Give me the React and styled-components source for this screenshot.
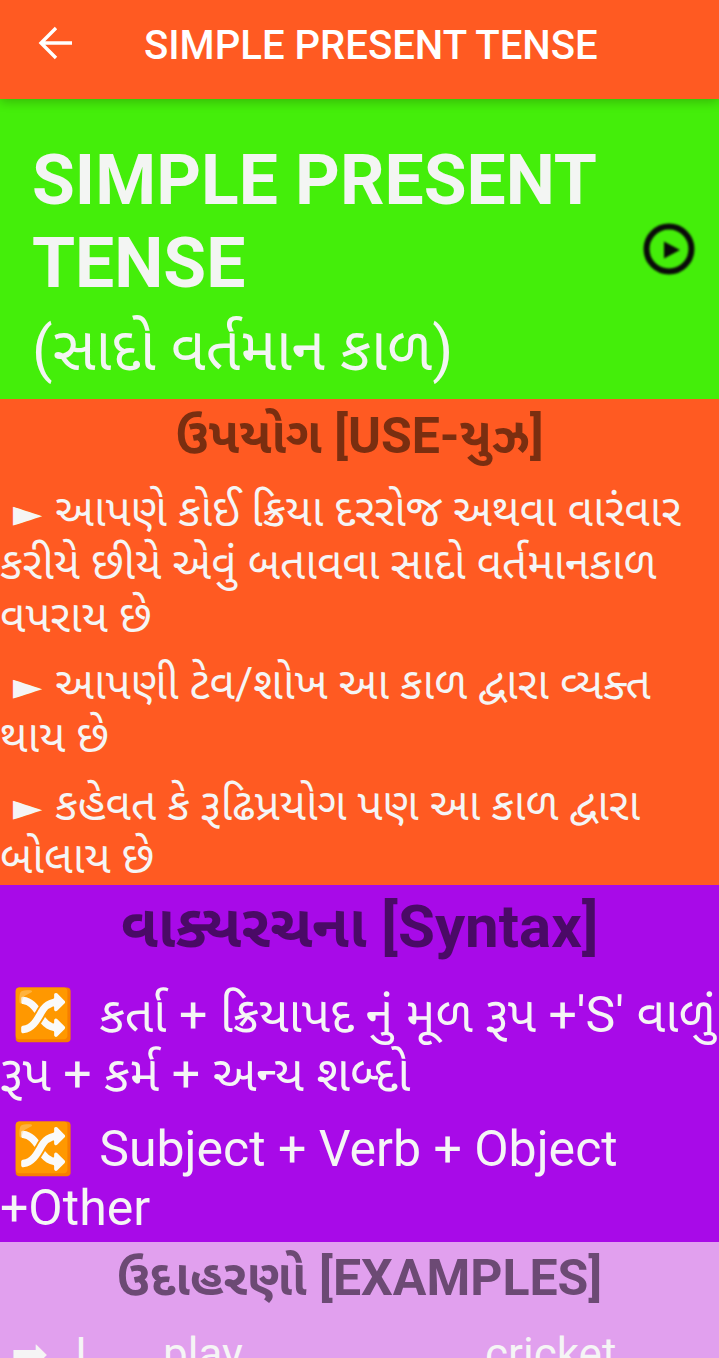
import styled, { createGlobalStyle } from 'styled-components';

const Global = createGlobalStyle`
  html, body { margin: 0; padding: 0; background: #fff; }
  body { height: 1358px; overflow: hidden; font-family: Roboto, "Noto Sans", sans-serif; }
`;

const Page = styled.div`
  width: 719px;
  height: 1358px;
  overflow: hidden;
  font-family: Roboto, "Noto Sans Gujarati", "Noto Sans", sans-serif;
`;
const AppBar = styled.header`
  height: 99px;
  background: #ff5a22;
  display: flex;
  align-items: flex-start;
  color: #fff;
  padding: 19px 0 0 32px;
  box-sizing: border-box;
  box-shadow: 0 3px 10px rgba(0, 0, 0, 0.22);
  position: relative;
  z-index: 1;
`;
const BackIcon = styled.svg`
  width: 48px;
  height: 48px;
  fill: none;
  stroke: #fff;
  stroke-width: 1.7;
`;
const AppTitle = styled.div`
  font-size: 40.1px;
  line-height: 54px;
  font-weight: 500;
  margin-left: 64px;
  white-space: nowrap;
`;
const Hero = styled.section`
  height: 300px;
  background: #44ee0a;
  display: flex;
  align-items: center;
  justify-content: space-between;
  padding: 0 24px 0 32px;
  box-sizing: border-box;
`;
const HeroText = styled.div`
  align-self: flex-start;
  padding-top: 40px;
`;
const HeroTitle = styled.div`
  font-size: 69.6px;
  line-height: 83px;
  font-weight: 700;
  color: #f3f5f3;
  width: 590px;
`;
const HeroSub = styled.div`
  font-size: 60.4px;
  line-height: 90px;
  color: #f3f5f3;
`;
const PlayIcon = styled.svg`
  width: 52px;
  height: 52px;
  flex: none;
  filter: blur(0.8px);
`;
const Section = styled.section`
  background: ${({ $bg }) => $bg};
  height: ${({ $h }) => $h}px;
  overflow: hidden;
  color: #f5f5f5;
`;
const Heading = styled.h2`
  margin: 0 0 ${({ $gap }) => $gap}px;
  padding-top: ${({ $top }) => $top}px;
  text-align: center;
  font-weight: 700;
  font-size: ${({ $size }) => $size}px;
  line-height: ${({ $line }) => $line}px;
  color: ${({ $color }) => $color};
`;
const Para = styled.p`
  margin: 0 0 ${({ $gap }) => $gap}px;
  font-size: ${({ $size }) => $size}px;
  line-height: ${({ $line }) => $line}px;
`;
const Pointer = styled.span`
  font-family: "DejaVu Sans", sans-serif;
  font-size: 38px;
  line-height: 1;
  padding: 0 2px;
`;
const ExampleRow = styled.div`
  display: grid;
  grid-template-columns: 75px 88px 322px auto;
  margin-top: 13px;
  font-size: 44px;
  line-height: 56px;
  white-space: nowrap;
`;
const ExampleArrow = styled.span`
  font-family: "DejaVu Sans", sans-serif;
  padding-left: 11px;
`;

export default function App() {
  return (
    <Page>
      <Global />
      <AppBar>
        <BackIcon viewBox="0 0 24 24">
          <path d="M20 12H5M12 4.5L4.5 12l7.5 7.5" />
        </BackIcon>
        <AppTitle>SIMPLE PRESENT TENSE</AppTitle>
      </AppBar>
      <Hero>
        <HeroText>
          <HeroTitle>SIMPLE PRESENT TENSE</HeroTitle>
          <HeroSub>(સાદો વર્તમાન કાળ)</HeroSub>
        </HeroText>
        <PlayIcon viewBox="0 0 52 52">
          <circle cx="26" cy="26" r="22.5" fill="none" stroke="#0a0a0a" strokeWidth="6" />
          <path d="M21 18.5L37 27 21 35.5z" fill="#0a0a0a" />
        </PlayIcon>
      </Hero>
      <Section $bg="#ff5a22" $h={486}>
        <Heading $top={2} $gap={14} $size={50} $line={70} $color="#7a2e10">ઉપયોગ [USE-યુઝ]</Heading>
        <Para $size={44.1} $line={53} $gap={13.5}>&nbsp;<Pointer>►</Pointer> આપણે કોઈ ક્રિયા દરરોજ અથવા વારંવાર કરીયે છીયે એવું બતાવવા સાદો વર્તમાનકાળ વપરાય છે</Para>
        <Para $size={44.1} $line={53} $gap={15}>&nbsp;<Pointer>►</Pointer> આપણી ટેવ/શોખ આ કાળ દ્વારા વ્યક્ત થાય છે</Para>
        <Para $size={44.1} $line={53} $gap={0}>&nbsp;<Pointer>►</Pointer> કહેવત કે રૂઢિપ્રયોગ પણ આ કાળ દ્વારા બોલાય છે</Para>
      </Section>
      <Section $bg="#a80ae8" $h={357}>
        <Heading $top={0} $gap={17} $size={60} $line={84} $color="#4a0a66">વાક્યરચના [Syntax]</Heading>
        <Para $size={50} $line={59} $gap={16}>&nbsp;🔀 &nbsp;કર્તા + ક્રિયાપદ નું મૂળ રૂપ +'S' વાળું રૂપ + કર્મ + અન્ય શબ્દો</Para>
        <Para $size={50} $line={59} $gap={0}>&nbsp;🔀 &nbsp;Subject + Verb + Object +Other</Para>
      </Section>
      <Section $bg="#e1a0ee" $h={116}>
        <Heading $top={1} $gap={0} $size={50} $line={70} $color="#6c4a74">ઉદાહરણો [EXAMPLES]</Heading>
        <ExampleRow>
          <ExampleArrow>➡</ExampleArrow>
          <span>I</span>
          <span>play</span>
          <span>cricket</span>
        </ExampleRow>
      </Section>
    </Page>
  );
}
